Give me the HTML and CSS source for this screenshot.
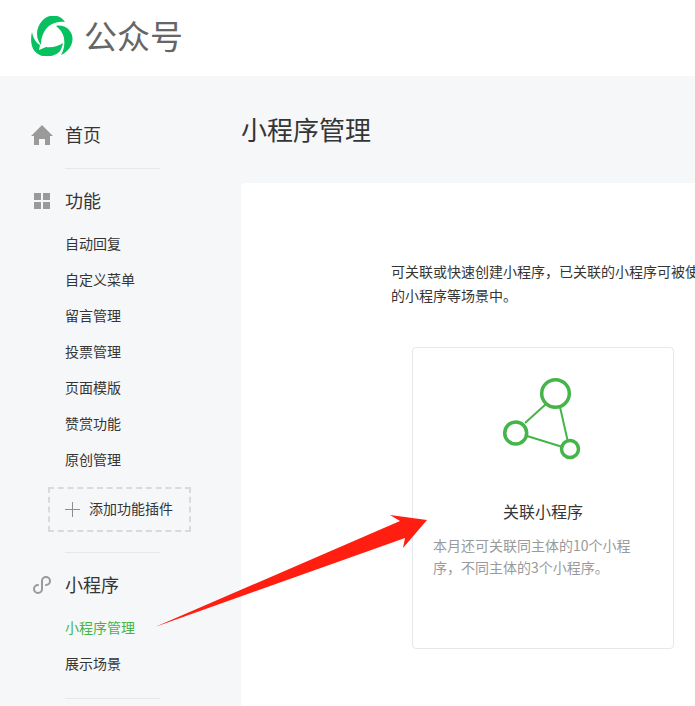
FILE: index.html
```html
<!DOCTYPE html>
<html lang="zh-CN">
<head>
<meta charset="utf-8">
<title>公众号</title>
<link rel="stylesheet" href="styles.css">
</head>
<body>
<header class="top">
  <svg class="logo" viewBox="31 16 42 40" width="42" height="40">
    <path fill="#07c160" d="M41 45C36 39 35 29 42 21 48 14 59 13 65 22 57 21 50 24 46 29 43 33 41 38 41 45Z"/>
    <path fill="#07c160" d="M56 26C64 24 72 30 72.500 38 73 45 68 52 61 55 64 50 65 44 64 38 63 33 60 29 56 26Z"/>
    <path fill="#07c160" d="M32 32C30 40 31 50 38 54 44 58 52 57 58 53 61 51 62 47 63 43 59 46 52 48 46 47L39 50 40 45C36 43 33 38 32 32Z"/>
  </svg>
  <span class="brand">公众号</span>
</header>
<div class="layout">
  <nav class="side">
    <div class="head">
      <svg class="ic" viewBox="0 0 22 20" width="22" height="20"><path fill="#9a9a9a" d="M11 0 22 11h-3v9h-5v-6H8v6H3v-9H0z"/></svg>
      <span class="label">首页</span>
    </div>
    <div class="rule"></div>
    <div class="head">
      <svg class="ic" viewBox="0 0 22 20" width="22" height="20"><path fill="#9a9a9a" d="M3 2h7v7H3zM12 2h7v7h-7zM3 11h7v7H3zM12 11h7v7h-7z"/></svg>
      <span class="label">功能</span>
    </div>
    <ul class="items">
      <li>自动回复</li>
      <li>自定义菜单</li>
      <li>留言管理</li>
      <li>投票管理</li>
      <li>页面模版</li>
      <li>赞赏功能</li>
      <li>原创管理</li>
    </ul>
    <div class="plugin">
      <svg viewBox="0 0 15 15" width="15" height="15"><path stroke="#8d8d8d" fill="none" d="M7.500 0v15M0 7.500h15"/></svg>
      <span class="plugin-text">添加功能插件</span>
    </div>
    <div class="rule rule-gap"></div>
    <div class="head">
      <svg class="ic" viewBox="0 0 22 20" width="22" height="20"><path fill="none" stroke="#9a9a9a" stroke-width="2" stroke-linecap="round" d="M11 11V6a4 4 0 1 1 4 4M11 9v5a4 4 0 1 1-4-4"/></svg>
      <span class="label">小程序</span>
    </div>
    <ul class="items">
      <li class="on">小程序管理</li>
      <li>展示场景</li>
    </ul>
    <div class="rule rule-end"></div>
  </nav>
  <main class="main">
    <h1 class="title">小程序管理</h1>
    <section class="panel">
      <p class="desc">可关联或快速创建小程序，已关联的小程序可被使<br>的小程序等场景中。</p>
      <div class="card">
        <svg class="graph" viewBox="0 0 86 88" width="86" height="88">
          <g fill="none" stroke="#44b549">
            <path stroke-width="2" d="M46 29 25 48M60 32l7.500 33M27 61l34 10.500"/>
            <circle cx="55.500" cy="18.500" r="13.800" stroke-width="3.500"/>
            <circle cx="15.700" cy="58" r="11" stroke-width="3.500"/>
            <circle cx="70" cy="74" r="8.500" stroke-width="3.500"/>
          </g>
        </svg>
        <h2 class="card-title">关联小程序</h2>
        <p class="hint">本月还可关联同主体的10个小程序，不同主体的3个小程序。</p>
      </div>
    </section>
  </main>
</div>
<svg class="arrow" viewBox="0 0 695 706" width="695" height="706"><polygon fill="#ff1e10" points="155,627 400,521 390,515 427,520 403,548 405,538"/></svg>
</body>
</html>
```

FILE: styles.css
```css
* { box-sizing: border-box; }
html, body { margin: 0; padding: 0; }
body {
  width: 695px;
  height: 706px;
  overflow: hidden;
  position: relative;
  background: #f6f7f9;
  color: #353535;
  font-family: "Noto Sans CJK SC", "Liberation Sans", sans-serif;
}
.top {
  height: 76px;
  background: #fff;
  display: flex;
  align-items: flex-start;
  padding: 16px 0 0 31px;
  gap: 11px;
}
.logo { flex: none; }
.brand { font-size: 33px; color: #666; line-height: 38px; }
.layout { display: flex; height: 630px; }
.side { width: 241px; flex: none; padding-top: 37px; }
.head {
  height: 44px;
  display: flex;
  align-items: center;
  font-size: 18px;
  padding-left: 31px;
}
.label { margin-bottom: 2px; }
.ic { margin-right: 12px; flex: none; }
.rule { height: 1px; width: 95px; margin: 11px 0 10px 65px; background: #e4e8eb; }
.rule-gap { margin-top: 20px; }
.rule-end { margin-top: 16px; }
.items { list-style: none; margin: 3px 0 0; padding: 0 0 0 65px; font-size: 14px; }
.items li { height: 36px; line-height: 35px; }
.items .on { color: #44b549; }
.plugin {
  margin: 9px 0 0 48px;
  width: 143px;
  height: 45px;
  border: 2px dashed #d9dadc;
  display: flex;
  align-items: center;
  gap: 9px;
  padding-left: 15px;
  font-size: 14px;
}
.plugin-text { margin-bottom: 3px; }
.main { flex: 1; min-width: 0; }
.title {
  height: 107px;
  margin: 0;
  padding-bottom: 2px;
  display: flex;
  align-items: center;
  font-size: 26px;
  font-weight: 400;
}
.panel {
  height: 523px;
  background: #fff;
  border-radius: 4px 0 0 0;
  padding: 76px 0 0 150px;
}
.desc { margin: 0; font-size: 14px; line-height: 24px; white-space: nowrap; }
.card {
  width: 262px;
  height: 302px;
  margin: 40px 0 0 21px;
  border: 1px solid #e4e8eb;
  border-radius: 4px;
  padding-top: 27px;
  display: flex;
  flex-direction: column;
  align-items: center;
}
.graph { flex: none; }
.card-title { margin: 36px 0 0; font-size: 16px; font-weight: 400; line-height: 24px; }
.hint {
  align-self: flex-start;
  margin: 11px 0 0 20px;
  width: 212px;
  font-size: 14px;
  line-height: 22px;
  color: #9a9a9a;
}
.arrow { position: absolute; left: 0; top: 0; pointer-events: none; }
```
